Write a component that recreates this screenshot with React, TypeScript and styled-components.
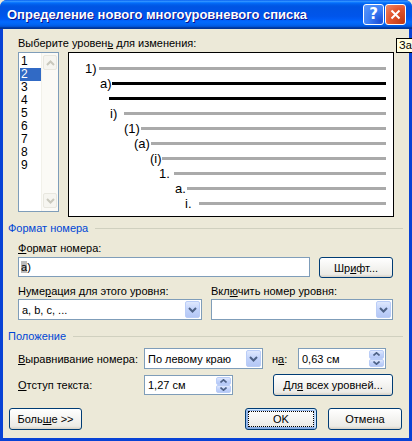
import styled, { createGlobalStyle } from 'styled-components'

const GlobalStyle = createGlobalStyle`
  html, body {
    margin: 0;
    padding: 0;
    background: #ece9d8;
    overflow: hidden;
  }
  body {
    font-family: "Liberation Sans", Arial, sans-serif;
    font-size: 11px;
    color: #000;
  }
  * { box-sizing: border-box; }
`

const levels = [
  { label: '1)', x: 85, line: 99, bold: false },
  { label: 'a)', x: 100, line: 112, bold: true },
  { label: '', x: 109, line: 109, bold: true },
  { label: 'i)', x: 110, line: 124, bold: false },
  { label: '(1)', x: 124, line: 141, bold: false },
  { label: '(a)', x: 134, line: 151, bold: false },
  { label: '(i)', x: 150, line: 162, bold: false },
  { label: '1.', x: 159, line: 174, bold: false },
  { label: 'a.', x: 175, line: 187, bold: false },
  { label: 'i.', x: 185, line: 199, bold: false },
]

const PREVIEW_LEFT = 69

const Chevron = ({ up, color = '#4d6185' }: { up?: boolean; color?: string }) => (
  <svg width='9' height='6' viewBox='0 0 9 6'>
    <path
      d={up ? 'M1 5 L4.5 1.5 L8 5' : 'M1 1 L4.5 4.5 L8 1'}
      fill='none'
      stroke={color}
      strokeWidth='2'
    />
  </svg>
)

const SmallArrow = ({ up }: { up?: boolean }) => (
  <svg width='7' height='4' viewBox='0 0 7 4'>
    <path
      d={up ? 'M0.5 3.5 L3.5 0.8 L6.5 3.5' : 'M0.5 0.5 L3.5 3.2 L6.5 0.5'}
      fill='none'
      stroke='#4d6185'
      strokeWidth='1.6'
    />
  </svg>
)

const App = () => {
  return (
    <>
      <GlobalStyle />
      <Window>
        <TitleBar>
          <Title>Определение нового многоуровневого списка</Title>
          <TitleButtons>
            <HelpButton>?</HelpButton>
            <CloseButton>
              <svg width='11' height='11' viewBox='0 0 11 11'>
                <path d='M1.5 1.5 L9.5 9.5 M9.5 1.5 L1.5 9.5' stroke='#fff' strokeWidth='2' />
              </svg>
            </CloseButton>
          </TitleButtons>
        </TitleBar>

        <Client>
          <LevelSection>
            <Caption>
              Выберите уровен<Key>ь</Key> для изменения:
            </Caption>
            <LevelRow>
              <LevelList>
                <LevelItems>
                  {[1, 2, 3, 4, 5, 6, 7, 8, 9].map((n) => (
                    <LevelItem key={n} $selected={n === 2}>
                      {n}
                    </LevelItem>
                  ))}
                </LevelItems>
                <ScrollTrack>
                  <ScrollArrow>
                    <Chevron up color='#c9c8bd' />
                  </ScrollArrow>
                  <ScrollArrow>
                    <Chevron color='#c9c8bd' />
                  </ScrollArrow>
                </ScrollTrack>
              </LevelList>

              <Preview>
                {levels.map((lvl, i) => (
                  <PreviewRow key={i} $indent={lvl.x - PREVIEW_LEFT}>
                    <PreviewLabel $width={lvl.line - lvl.x}>{lvl.label}</PreviewLabel>
                    <PreviewLine $bold={lvl.bold} />
                  </PreviewRow>
                ))}
              </Preview>
            </LevelRow>
          </LevelSection>

          <GroupHeader>
            <GroupTitle>Формат номера</GroupTitle>
            <GroupLine />
          </GroupHeader>

          <GroupBody>
            <FieldLabel>
              <Key>Ф</Key>ормат номера:
            </FieldLabel>
            <FormatRow>
              <TextInput $width={292}>
                <span>
                  <Selected>a</Selected>)
                </span>
              </TextInput>
              <PushButton $width={74} $height={21}>
                <span>
                  Шр<Key>и</Key>фт...
                </span>
              </PushButton>
            </FormatRow>

            <LabelsRow>
              <ColumnLabel $width={193}>
                Нуме<Key>р</Key>ация для этого уровня:
              </ColumnLabel>
              <ColumnLabel>
                Вкл<Key>ю</Key>чить номер уровня:
              </ColumnLabel>
            </LabelsRow>
            <ComboRow>
              <Combo $width={184}>
                <ComboText>a, b, c, ...</ComboText>
                <DropButton>
                  <Chevron />
                </DropButton>
              </Combo>
              <Combo $width={182}>
                <ComboText />
                <DropButton>
                  <Chevron />
                </DropButton>
              </Combo>
            </ComboRow>
          </GroupBody>

          <GroupHeader $gap={10}>
            <GroupTitle>Положение</GroupTitle>
            <GroupLine />
          </GroupHeader>

          <GroupBody>
            <PositionRow>
              <RowLabel>
                <Key>В</Key>ыравнивание номера:
              </RowLabel>
              <Combo $width={119}>
                <ComboText>По левому краю</ComboText>
                <DropButton>
                  <Chevron />
                </DropButton>
              </Combo>
              <InlineLabel>
                н<Key>а</Key>:
              </InlineLabel>
              <Spinner $width={88} $height={21}>
                <ComboText>0,63 см</ComboText>
                <SpinButtons>
                  <SpinHalf>
                    <SmallArrow up />
                  </SpinHalf>
                  <SpinHalf>
                    <SmallArrow />
                  </SpinHalf>
                </SpinButtons>
              </Spinner>
            </PositionRow>
            <PositionRow>
              <RowLabel>
                <Key>О</Key>тступ текста:
              </RowLabel>
              <Spinner $width={89} $height={20}>
                <ComboText>1,27 см</ComboText>
                <SpinButtons>
                  <SpinHalf>
                    <SmallArrow up />
                  </SpinHalf>
                  <SpinHalf>
                    <SmallArrow />
                  </SpinHalf>
                </SpinButtons>
              </Spinner>
              <AllLevelsButton $width={120} $height={22}>
                <span>
                  Дл<Key>я</Key> всех уровней...
                </span>
              </AllLevelsButton>
            </PositionRow>
          </GroupBody>

          <Footer>
            <PushButton $width={73} $height={22}>
              <span>
                Боль<Key>ш</Key>е &gt;&gt;
              </span>
            </PushButton>
            <Spacer />
            <PushButton $width={72} $height={22} $focused>
              <FocusRect>OK</FocusRect>
            </PushButton>
            <PushButton $width={74} $height={22}>
              Отмена
            </PushButton>
          </Footer>
        </Client>

        <Tooltip>За</Tooltip>
      </Window>
    </>
  )
}

const Window = styled.div`
  position: relative;
  width: 412px;
  height: 441px;
  display: flex;
  flex-direction: column;
  background: #0842d5;
  border-radius: 7px 7px 0 0;
  overflow: hidden;
`

const TitleBar = styled.div`
  height: 29px;
  flex: none;
  display: flex;
  align-items: center;
  justify-content: space-between;
  padding: 0 6px 1px 7px;
  background: linear-gradient(
    180deg,
    #0058ee 0%,
    #3593ff 4%,
    #288eff 6%,
    #127dff 8%,
    #036ffc 10%,
    #0262ee 14%,
    #0057e5 20%,
    #0054e3 24%,
    #0055eb 56%,
    #005bf5 66%,
    #026afe 76%,
    #0062ef 86%,
    #0052d6 92%,
    #0040ab 94%,
    #003092 100%
  );
`

const Title = styled.div`
  font-family: "Liberation Sans", Arial, sans-serif;
  font-weight: bold;
  font-size: 13px;
  color: #fff;
  text-shadow: 1px 1px #0f1089;
  white-space: nowrap;
`

const TitleButtons = styled.div`
  display: flex;
  gap: 1px;
`

const TitleButtonBase = styled.div`
  width: 21px;
  height: 21px;
  border: 1px solid #fff;
  border-radius: 3px;
  display: flex;
  align-items: center;
  justify-content: center;
  color: #fff;
`

const HelpButton = styled(TitleButtonBase)`
  background: radial-gradient(circle at 85% 85%, #1c4fd8 0%, #3c7ef5 50%, #5d99fb 100%);
  font-family: "DejaVu Sans", Verdana, sans-serif;
  font-weight: bold;
  font-size: 15px;
`

const CloseButton = styled(TitleButtonBase)`
  background: radial-gradient(circle at 90% 90%, #c23a14 0%, #e2542c 55%, #f08a6a 100%);
`

const Client = styled.div`
  flex: 1;
  margin: 0 3px 3px 3px;
  background: #ece9d8;
  display: flex;
  flex-direction: column;
`

const Key = styled.span`
  text-decoration: underline;
`

const LevelSection = styled.div`
  padding: 8px 0 0 15px;
`

const Caption = styled.div`
  height: 13px;
  line-height: 13px;
  margin-bottom: 2px;
`

const LevelRow = styled.div`
  display: flex;
  align-items: flex-start;
  gap: 9px;
`

const LevelList = styled.div`
  width: 41px;
  height: 160px;
  border: 1px solid #7f9db9;
  background: #fff;
  display: flex;
`

const LevelItems = styled.div`
  width: 22px;
  padding: 2px 0 0 1px;
`

const LevelItem = styled.div<{ $selected?: boolean }>`
  height: 13px;
  line-height: 13px;
  font-size: 12px;
  padding-left: 1px;
  background: ${(p) => (p.$selected ? '#316ac5' : 'transparent')};
  color: ${(p) => (p.$selected ? '#fff' : '#000')};
`

const ScrollTrack = styled.div`
  flex: 1;
  background: #fbfaf6;
  border-left: 1px solid #f2f1ea;
  display: flex;
  flex-direction: column;
  justify-content: space-between;
  padding: 2px 1px 3px 1px;
`

const ScrollArrow = styled.div`
  height: 15px;
  border: 1px solid #e8e7df;
  border-radius: 2px;
  background: #f6f5f0;
  display: flex;
  align-items: center;
  justify-content: center;
`

const Preview = styled.div`
  width: 326px;
  height: 165px;
  border: 1px solid #000;
  background: #fff;
  padding: 8px 7px 0 0;
`

const PreviewRow = styled.div<{ $indent: number }>`
  height: 15px;
  display: flex;
  align-items: center;
  padding-left: ${(p) => p.$indent}px;
`

const PreviewLabel = styled.div<{ $width: number }>`
  width: ${(p) => p.$width}px;
  flex: none;
  font-size: 13px;
  line-height: 15px;
  white-space: nowrap;
`

const PreviewLine = styled.div<{ $bold?: boolean }>`
  flex: 1;
  height: 3px;
  background: ${(p) => (p.$bold ? '#000' : '#aaaaaa')};
`

const GroupHeader = styled.div<{ $gap?: number }>`
  margin-top: ${(p) => p.$gap ?? 5}px;
  height: 13px;
  padding: 0 6px 0 5px;
  display: flex;
  align-items: center;
  gap: 7px;
`

const GroupTitle = styled.div`
  color: #0046d5;
  line-height: 13px;
  white-space: nowrap;
`

const GroupLine = styled.div`
  flex: 1;
  height: 1px;
  background: #d0d0bf;
`

const GroupBody = styled.div`
  padding-left: 15px;
`

const FieldLabel = styled.div`
  margin-top: 7px;
  height: 13px;
  line-height: 13px;
`

const FormatRow = styled.div`
  margin-top: 2px;
  display: flex;
  align-items: flex-start;
  gap: 9px;
`

const Field = styled.div<{ $width: number; $height?: number }>`
  width: ${(p) => p.$width}px;
  height: ${(p) => p.$height ?? 21}px;
  border: 1px solid #7f9db9;
  background: #fff;
  display: flex;
  align-items: stretch;
`

const TextInput = styled(Field)`
  height: 20px;
  align-items: center;
  padding-left: 2px;
  line-height: 14px;
`

const Selected = styled.span`
  background: #bcbcbc;
`

const PushButton = styled.div<{ $width: number; $height: number; $focused?: boolean }>`
  width: ${(p) => p.$width}px;
  height: ${(p) => p.$height}px;
  flex: none;
  border: 1px solid #003c74;
  border-radius: 3px;
  background: linear-gradient(180deg, #fff, #ecebe6 86%, #d6d0c5);
  display: flex;
  align-items: center;
  justify-content: center;
  white-space: nowrap;
  padding: ${(p) => (p.$focused ? '2px' : '0')};
  box-shadow: ${(p) =>
    p.$focused
      ? 'inset -1px 1px #cee7ff, inset 1px 2px #98b8ea, inset -2px 2px #bcd4f6, inset 1px -1px #89ade4, inset 2px -2px #89ade4'
      : 'none'};
`

const FocusRect = styled.div`
  width: 100%;
  height: 100%;
  border: 1px dotted #000;
  display: flex;
  align-items: center;
  justify-content: center;
`

const LabelsRow = styled.div`
  margin-top: 7px;
  display: flex;
  height: 13px;
  line-height: 13px;
`

const ColumnLabel = styled.div<{ $width?: number }>`
  width: ${(p) => (p.$width ? `${p.$width}px` : 'auto')};
`

const ComboRow = styled.div`
  margin-top: 1px;
  display: flex;
  gap: 9px;
`

const Combo = styled(Field)`
  padding: 1px;
`

const ComboText = styled.div`
  flex: 1;
  display: flex;
  align-items: center;
  padding-left: 2px;
  white-space: nowrap;
  overflow: hidden;
`

const DropButton = styled.div`
  width: 15px;
  flex: none;
  border: 1px solid #bacdf7;
  border-radius: 2px;
  background: linear-gradient(180deg, #dfe8fd 0%, #c2d3fb 50%, #b4c7f5 100%);
  display: flex;
  align-items: center;
  justify-content: center;
`

const PositionRow = styled.div`
  margin-top: 5px;
  display: flex;
  align-items: center;
`

const RowLabel = styled.div`
  width: 126px;
  flex: none;
`

const InlineLabel = styled.div`
  width: 26px;
  margin-left: 9px;
  flex: none;
`

const Spinner = styled(Field)`
  padding: 1px;
`

const SpinButtons = styled.div`
  width: 15px;
  flex: none;
  display: flex;
  flex-direction: column;
`

const SpinHalf = styled(DropButton)`
  flex: 1;
  width: 15px;
`

const AllLevelsButton = styled(PushButton)`
  margin-left: 40px;
`

const Footer = styled.div`
  margin-top: auto;
  margin-bottom: 8px;
  padding: 0 7px 0 6px;
  display: flex;
  gap: 11px;
`

const Spacer = styled.div`
  flex: 1;
`

const Tooltip = styled.div`
  position: absolute;
  left: 396px;
  top: 38px;
  height: 15px;
  padding: 0 4px 0 2px;
  border: 1px solid #000;
  background: #ffffe1;
  line-height: 13px;
  white-space: nowrap;
`

export default App
